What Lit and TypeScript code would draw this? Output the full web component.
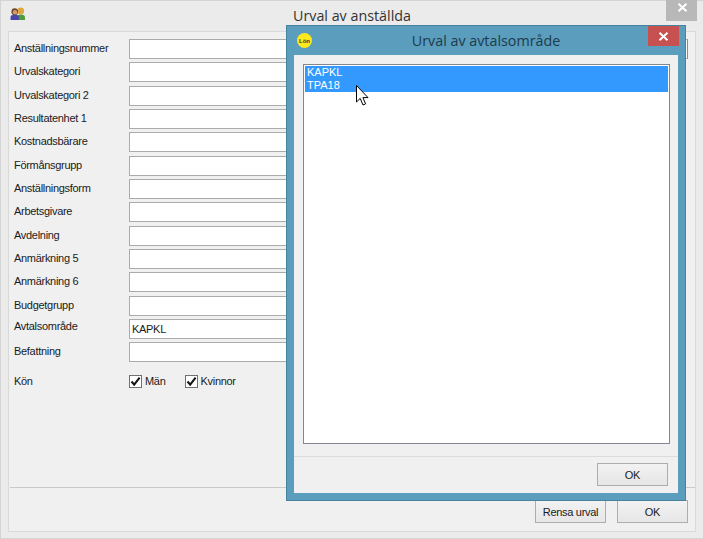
import { LitElement, html, css, svg } from "lit";
import { customElement } from "lit/decorators.js";

const ROWS: [string, string, number][] = [
  ["Anställningsnummer", "", -1],
  ["Urvalskategori", "", -1],
  ["Urvalskategori 2", "", -1],
  ["Resultatenhet 1", "", -1],
  ["Kostnadsbärare", "", -1],
  ["Förmånsgrupp", "", -1],
  ["Anställningsform", "", -1],
  ["Arbetsgivare", "", -1],
  ["Avdelning", "", -1],
  ["Anmärkning 5", "", -1],
  ["Anmärkning 6", "", -1],
  ["Budgetgrupp", "", -1],
  ["Avtalsområde", "KAPKL", -3],
  ["Befattning", "", -1],
];

const check = svg`<svg class="tick" viewBox="0 0 11 11" width="11" height="11"><path d="M1.5 5.5 L4.2 8.6 L9.6 1.6" fill="none" stroke="#111" stroke-width="2"/></svg>`;

@customElement("app-root")
export class AppRoot extends LitElement {
  static styles = css`
    :host { display: block; width: 704px; height: 539px; position: relative; overflow: hidden;
      font-family: "Liberation Sans", Arial, sans-serif; font-size: 11px; letter-spacing: -0.3px; color: #1a1a1a; }
    .win { box-sizing: border-box; width: 704px; height: 539px; background: #ebebeb; border: 1px solid #d4d4d4;
      display: flex; flex-direction: column; padding: 0 7px 6px; }
    .bar { height: 30px; flex: none; display: flex; align-items: center; position: relative; }
    .bar svg { margin: -6px 0 0 2px; }
    .title { position: absolute; left: 285px; top: 5px; font: 14.3px "Open Sans", sans-serif; letter-spacing: 0; color: #333; }
    .close { position: absolute; right: -1px; top: -1px; width: 31px; height: 21px; background: #b8b8b8; display: flex; align-items: center; justify-content: center; }
    .client { flex: 1; background: #f0f0f0; border: 1px solid #d9d9d9; display: flex; flex-direction: column; position: relative; }
    .form { padding: 7px 0 0 5px; display: flex; flex-direction: column; gap: 3.333px; height: 455px; box-sizing: border-box; }
    .row { display: grid; grid-template-columns: 115px 1fr; height: 20px; align-items: center; }
    .row label { display: block; }
    .input { box-sizing: border-box; height: 20px; margin-right: 150px; background: #fff; border: 1px solid #ababab; padding-left: 2px; line-height: 18px; }
    .input.long { margin-right: 7px; border-right-color: #8a8a8a; }
    .kon { margin-top: 5.5px; }
    .checks { display: flex; align-items: center; gap: 19px; }
    .ck { display: flex; align-items: center; gap: 3px; }
    .box { box-sizing: border-box; width: 13px; height: 13px; border: 1px solid #707070; background: #fff; display: flex; align-items: center; justify-content: center; }
    .foot { flex: 1; margin-left: 1px; border-top: 1px solid #c9c9c9; display: flex; justify-content: flex-end; gap: 11px; padding: 12px 7px 0 0; }
    .btn { box-sizing: border-box; width: 71px; height: 23px; border: 1px solid #adadad; background: linear-gradient(#f2f2f2, #e6e6e6); display: flex; align-items: center; justify-content: center; }

    .modal { position: absolute; left: 286px; top: 25px; box-sizing: border-box; width: 400px; height: 476px; background: #5a9dbd; border: 1px solid #47829f; display: flex; flex-direction: column; padding: 0 7px 7px; }
    .mbar { height: 29px; flex: none; position: relative; display: flex; align-items: center; justify-content: center; }
    .mtitle { font: 14.3px "Open Sans", sans-serif; letter-spacing: 0; color: #1d3b4c; }
    .logo { position: absolute; left: 3px; top: 7px; width: 15px; height: 15px; border-radius: 50%; background: #ffe81e; font-size: 6px; letter-spacing: 0; font-weight: bold; display: flex; align-items: center; justify-content: center; color: #333; }
    .mclose { position: absolute; right: -1px; top: 0; width: 31px; height: 20px; background: #c75050; display: flex; align-items: center; justify-content: center; }
    .mclient { flex: 1; background: #f0f0f0; display: flex; flex-direction: column; padding: 9px 8px 0 9px; min-height: 0; }
    .list { box-sizing: border-box; height: 380px; flex: none; background: #fff; border: 1px solid #828790; padding: 1px; }
    .sel { background: #3399ff; color: #fff; padding-left: 2px; height: 13px; line-height: 13px; letter-spacing: 0; }
    .mfoot { flex: 1; margin: 12px -8px 0 -9px; border-top: 1px solid #dcdcdc; display: flex; justify-content: flex-end; padding: 6px 10px 0 0; }
    .cursor { position: absolute; left: 356px; top: 85px; }
  `;

  render() {
    const x = (c: string) => html`<svg width="11" height="9" viewBox="0 0 11 9"><path d="M1.5 .8 L9.5 8.2 M9.5 .8 L1.5 8.2" stroke="${c}" stroke-width="2"/></svg>`;
    return html`
      <div class="win">
        <div class="bar">
          <svg width="16" height="13" viewBox="0 0 17 14">
            <circle cx="11.5" cy="4.2" r="3.6" fill="#e0a63f"/>
            <path d="M7 14 v-3.2 q0-2.8 4.5-2.8 t4.5 2.8 V14z" fill="#4f9a3c"/>
            <circle cx="5" cy="5" r="3.6" fill="#6a4a2c"/><circle cx="5.3" cy="5.6" r="2.4" fill="#d89a6a"/>
            <path d="M.5 14 v-3 q0-2.6 4.5-2.6 t4.5 2.6 V14z" fill="#4a45a8"/>
          </svg>
          <span class="title">Urval av anställda</span>
          <span class="close">${x("#fff")}</span>
        </div>
        <div class="client">
          <div class="form">
            ${ROWS.map(([l, v, off], i) => html`<div class="row"><label style="transform:translateY(${off}px)">${l}</label><div class="input ${i === 0 ? "long" : ""}">${v}</div></div>`)}
            <div class="row kon">
              <label>Kön</label>
              <div class="checks">
                <span class="ck"><span class="box">${check}</span>Män</span>
                <span class="ck"><span class="box">${check}</span>Kvinnor</span>
              </div>
            </div>
          </div>
          <div class="foot">
            <div class="btn">Rensa urval</div>
            <div class="btn">OK</div>
          </div>
        </div>
      </div>
      <div class="modal">
        <div class="mbar">
          <span class="logo">Lön</span>
          <span class="mtitle">Urval av avtalsområde</span>
          <span class="mclose">${x("#fff")}</span>
        </div>
        <div class="mclient">
          <div class="list"><div class="sel">KAPKL</div><div class="sel">TPA18</div></div>
          <div class="mfoot"><div class="btn">OK</div></div>
        </div>
      </div>
      <svg class="cursor" width="13" height="22" viewBox="0 0 13 22">
        <path d="M.5 .5 V17 L4.2 13.4 L7 20 L9.6 18.9 L6.9 12.6 H12 Z" fill="#fff" stroke="#000" stroke-width="1"/>
      </svg>
    `;
  }
}
